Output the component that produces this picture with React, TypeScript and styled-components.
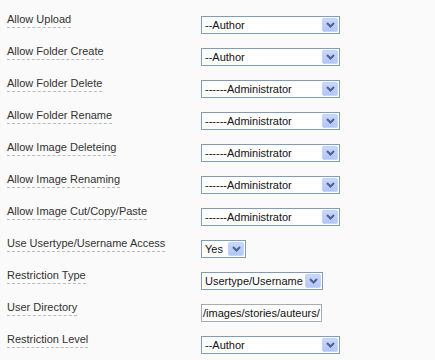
import React from "react";
import styled, { createGlobalStyle } from "styled-components";

const Global = createGlobalStyle`
  html, body { margin: 0; padding: 0; background: #fafafa; }
  body { font-family: "Liberation Sans", Arial, sans-serif; }
`;

const Page = styled.div`
  padding: 8px 0 0 7px;
  width: 428px;
  height: 352px;
  background: #fafafa;
`;

const Row = styled.div`
  display: grid;
  grid-template-columns: 194px 1fr;
  height: 32px;
  align-items: start;
`;

const Label = styled.span`
  justify-self: start;
  margin-top: 5px;
  font-size: 11px;
  line-height: 13px;
  color: #333;
  padding-bottom: 1px;
  border-bottom: 1px dashed #bbb;
`;

const SelectBox = styled.div<{ $w: number }>`
  margin-top: 8px;
  width: ${(p) => p.$w}px;
  height: 18px;
  box-sizing: border-box;
  border: 1px solid #7f9db9;
  background: #fff;
  display: flex;
  align-items: center;
  padding: 0 1px 0 3px;
  font-size: 11px;
  color: #111;
  white-space: nowrap;
  overflow: hidden;
`;

const SelectText = styled.span`
  flex: 1;
  overflow: hidden;
`;

const ArrowBtn = styled.span`
  width: 16px;
  height: 14px;
  box-sizing: border-box;
  border: 1px solid #c3d3fd;
  border-radius: 2px;
  background: linear-gradient(#c8d7fc, #b3c7f5);
  display: flex;
  align-items: center;
  justify-content: center;
`;

const TextInput = styled.div`
  margin-top: 8px;
  width: 121px;
  height: 18px;
  box-sizing: border-box;
  border: 1px solid #a5acb2;
  background: #fff;
  padding: 0 0 0 1px;
  font-size: 11px;
  line-height: 16px;
  color: #111;
  white-space: nowrap;
  overflow: hidden;
`;

const Chevron = () => (
  <svg width="9" height="6" viewBox="0 0 9 6">
    <path d="M1 1 L4.5 4.5 L8 1" fill="none" stroke="#4d6185" strokeWidth="2" />
  </svg>
);

const Select = ({ value, w }: { value: string; w: number }) => (
  <SelectBox $w={w}>
    <SelectText>{value}</SelectText>
    <ArrowBtn>
      <Chevron />
    </ArrowBtn>
  </SelectBox>
);

const rows: { label: string; value: string; w: number; input?: boolean }[] = [
  { label: "Allow Upload", value: "--Author", w: 139 },
  { label: "Allow Folder Create", value: "--Author", w: 139 },
  { label: "Allow Folder Delete", value: "------Administrator", w: 139 },
  { label: "Allow Folder Rename", value: "------Administrator", w: 139 },
  { label: "Allow Image Deleteing", value: "------Administrator", w: 139 },
  { label: "Allow Image Renaming", value: "------Administrator", w: 139 },
  { label: "Allow Image Cut/Copy/Paste", value: "------Administrator", w: 139 },
  { label: "Use Usertype/Username Access", value: "Yes", w: 45 },
  { label: "Restriction Type", value: "Usertype/Username", w: 122 },
  { label: "User Directory", value: "/images/stories/auteurs/", w: 121, input: true },
  { label: "Restriction Level", value: "--Author", w: 139 },
];

export default function App() {
  return (
    <>
      <Global />
      <Page>
        {rows.map((r) => (
          <Row key={r.label}>
            <Label>{r.label}</Label>
            {r.input ? <TextInput>{r.value}</TextInput> : <Select value={r.value} w={r.w} />}
          </Row>
        ))}
      </Page>
    </>
  );
}
